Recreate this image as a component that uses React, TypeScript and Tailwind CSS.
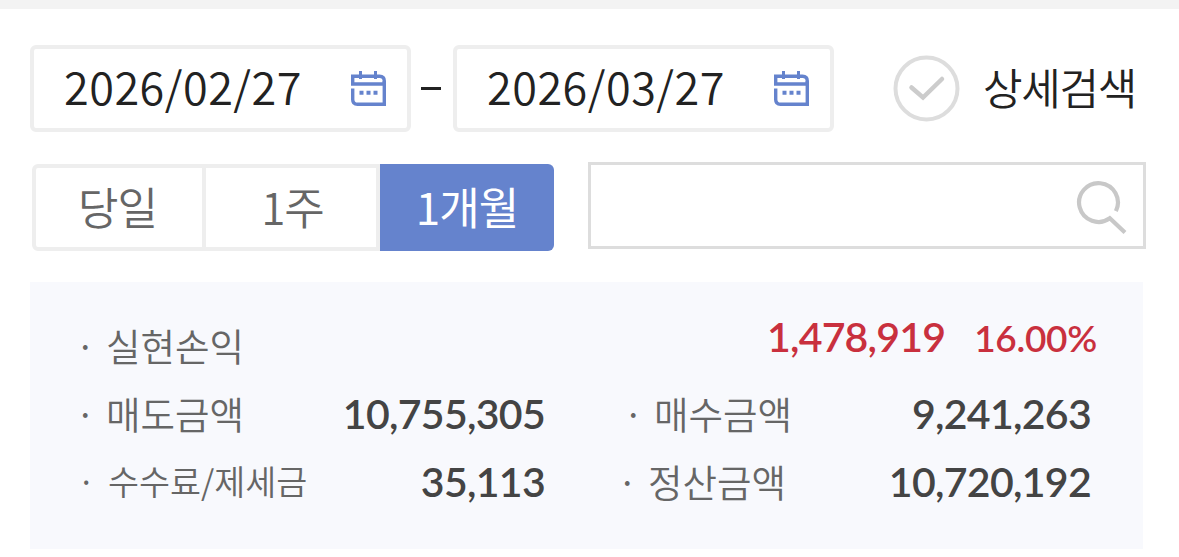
import clsx from "clsx";

const PERIODS = [
  { key: "day", label: "당일", style: "w-[174px] rounded-l-md border-4 border-[#eee] pr-[3px] font-[350] text-[#666]" },
  { key: "week", label: "1주", style: "w-[174px] border-y-4 border-r-4 border-[#eee] pl-[3px] font-[350] text-[#666]" },
  { key: "month", label: "1개월", style: "w-[174px] rounded-r-md bg-[#6583cd] font-normal text-white" },
];

export default function App() {
  return (
    <div className="h-[557px] w-[1179px] overflow-hidden bg-white font-['Noto_Sans_CJK_KR',sans-serif]">
      <div className="h-[9px] bg-[#f3f3f3]" />

      {/* 조회 기간 */}
      <div className="mt-9 ml-[30px] flex h-[87px] items-center">
        <DateField value="2026/02/27" />
        <div className="mr-[12px] ml-[10px] h-[3px] w-5 bg-[#222]" />
        <DateField value="2026/03/27" />
        <CheckIcon />
        <span className="ml-[23px] pb-[4px] text-[43px] leading-none font-[350] tracking-[-1.3px] text-[#222]">
          상세검색
        </span>
      </div>

      {/* 기간 단축 버튼 + 검색 */}
      <div className="mt-[30px] ml-8 flex">
        <div className="mt-[2px] flex h-[87px] w-[522px]">
          {PERIODS.map((p) => (
            <button
              key={p.key}
              className={clsx(
                "flex items-center justify-center pb-[4px] text-[44px] leading-none tracking-[-1px]",
                p.style,
              )}
            >
              {p.label}
            </button>
          ))}
        </div>
        <div className="ml-[34px] flex h-[87px] w-[558px] items-center justify-end border-[3px] border-[#ddd] pt-[3px] pr-4">
          <SearchIcon />
        </div>
      </div>

      {/* 손익 요약 */}
      <div className="mt-[31px] ml-[30px] h-[267px] w-[1113px] bg-[#f8f9fd] pt-[29px]">
        <div className="flex h-[68px] items-center">
          <Label text="실현손익" className="ml-[50px] text-[37.5px]" />
          <div className="mr-[46px] ml-auto flex items-baseline pb-[17px] font-['Lato',sans-serif] font-semibold text-[#c9303e]">
            <span className="text-[41px] leading-none tracking-[-0.8px]">1,478,919</span>
            <span className="ml-[29px] text-[37px] leading-none tracking-[-0.3px]">16.00%</span>
          </div>
        </div>
        <div className="flex h-[68px] items-center">
          <Label text="매도금액" className="ml-[50px] w-[192px] text-[37.5px]" />
          <Amount value="10,755,305" />
          <Label text="매수금액" className="ml-[83px] w-[190px] text-[37.5px]" />
          <Amount value="9,241,263" />
        </div>
        <div className="flex h-[68px] items-center">
          <Label text="수수료/제세금" className="ml-[52px] w-[190px] text-[33.7px]" />
          <Amount value="35,113" />
          <Label text="정산금액" className="ml-[77px] w-[196px] text-[37.5px]" />
          <Amount value="10,720,192" />
        </div>
      </div>
    </div>
  );
}

// ── 내부 소형 컴포넌트 ────────────────────────────────
function DateField({ value }: { value: string }) {
  return (
    <div className="flex h-[87px] w-[381px] items-center rounded-md border-4 border-[#eee] pl-[30px]">
      <span className="w-[287px] pb-[7px] text-[45px] leading-none font-[350] tracking-[0.5px] text-[#222]">{value}</span>
      <CalendarIcon />
    </div>
  );
}

function Label({ text, className }: { text: string; className: string }) {
  return (
    <div className={clsx("flex shrink-0 items-center leading-none font-[350] whitespace-nowrap text-[#666]", className)}>
      <span className="-ml-[5px] w-[31px] shrink-0">·</span>
      <span>{text}</span>
    </div>
  );
}

function Amount({ value }: { value: string }) {
  return (
    <div className="w-[273px] shrink-0 text-right font-['Lato',sans-serif] text-[41px] leading-none font-semibold tracking-[-0.7px] text-[#444]">
      {value}
    </div>
  );
}

function CalendarIcon() {
  return (
    <svg width="35" height="35" viewBox="0 0 35 35" fill="none" stroke="#6583cd" strokeWidth="3.4">
      <path d="M1.7 13V5.2H28.5Q33.3 5.2 33.3 10V13Z" />
      <path d="M1.7 17.5V28.5Q1.7 33.3 6.5 33.3H33.3V10" />
      <path d="M9.5 0V8M24.5 0V8" strokeWidth="3" />
      <path d="M8.5 21.7H26.5" strokeWidth="4" strokeDasharray="4 3" />
    </svg>
  );
}

function CheckIcon() {
  return (
    <svg className="ml-[59px]" width="67" height="67" viewBox="0 0 67 67" fill="none" strokeLinecap="round">
      <circle cx="33.5" cy="33.5" r="31" stroke="#ddd" strokeWidth="4" />
      <path d="M18.5 32.5L30 42.5L49 24" stroke="#ccc" strokeWidth="4.5" />
    </svg>
  );
}

function SearchIcon() {
  return (
    <svg width="52" height="54" viewBox="0 0 52 54" fill="none" stroke="#c8c8c8" strokeWidth="4.2">
      <path d="M40.9 31.1A19.4 19.4 0 1 0 34.8 38.3L50 52.5" />
    </svg>
  );
}
